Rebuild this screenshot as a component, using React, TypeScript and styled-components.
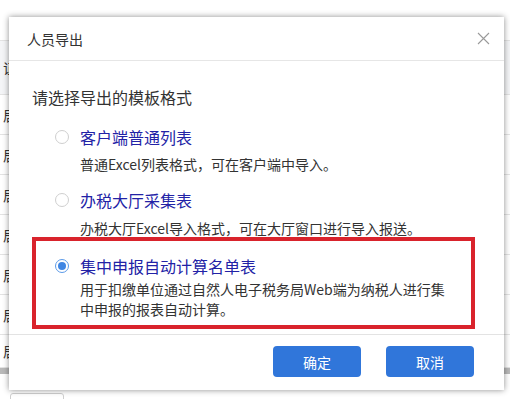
import React from "react";
import styled, { createGlobalStyle } from "styled-components";

const GlobalStyle = createGlobalStyle`
  html, body {
    margin: 0;
    padding: 0;
    background: #ffffff;
  }
  body {
    font-family: "Noto Sans CJK SC", "Noto Sans", "Liberation Sans", sans-serif;
    color: #333333;
  }
  * {
    box-sizing: border-box;
  }
`;

const Page = styled.div`
  position: relative;
  width: 510px;
  height: 399px;
  overflow: hidden;
  padding-top: 40px;
`;

const Table = styled.div`
  border-top: 1px solid #e3e3e3;
`;

const HeaderRow = styled.div`
  height: 54px;
  display: flex;
  align-items: center;
  padding-left: 3px;
  background: #f4f5f7;
  border-bottom: 1px solid #e3e3e3;
  font-size: 14px;
`;

const Row = styled.div<{ $height?: number }>`
  height: ${(p) => p.$height ?? 40}px;
  display: flex;
  align-items: center;
  padding-left: 3px;
  border-bottom: 1px solid #e3e3e3;
  font-size: 14px;
`;

const Scrollbar = styled.div`
  height: 6px;
  background: #b9b9b9;
`;

const Pager = styled.div`
  margin: 19px 0 0 10px;
  width: 54px;
  height: 24px;
  border: 1px solid #cfcfcf;
  border-radius: 3px;
  font-size: 13px;
  padding-left: 12px;
  line-height: 20px;
`;

const Dialog = styled.div`
  position: absolute;
  left: 9px;
  top: 17px;
  width: 495px;
  height: 373px;
  background: #ffffff;
  box-shadow: 0 0 6px rgba(0, 0, 0, 0.45);
  display: flex;
  flex-direction: column;
`;

const DialogHeader = styled.div`
  height: 44px;
  flex-shrink: 0;
  display: flex;
  align-items: center;
  justify-content: space-between;
  padding: 0 13px 0 18px;
  border-bottom: 1px solid #e6e6e6;
  font-size: 14px;
  color: #333333;
`;

const CloseButton = styled.button`
  width: 16px;
  height: 16px;
  padding: 0;
  border: none;
  background: none;
  display: flex;
  align-items: center;
  justify-content: center;
  cursor: pointer;
`;

const DialogBody = styled.div`
  flex: 1;
  padding: 25px 29px 0 23px;
`;

const Prompt = styled.div`
  font-size: 16px;
  line-height: 22px;
  color: #333333;
  margin-bottom: 18px;
`;

const Option = styled.div<{ $selected?: boolean; $gap: number; $after: number }>`
  padding: ${(p) => (p.$selected ? "14px 0 6px 19px" : "0 0 0 23px")};
  border: ${(p) => (p.$selected ? "4px solid #d9232c" : "none")};
  margin-bottom: ${(p) => p.$after}px;

  & > p {
    margin: ${(p) => p.$gap}px 0 0 25px;
  }
`;

const OptionHead = styled.label`
  display: flex;
  align-items: center;
  gap: 11px;
  height: 22px;
  cursor: pointer;
`;

const Radio = styled.span<{ $checked?: boolean }>`
  width: 14px;
  height: 14px;
  border-radius: 50%;
  border: 1px solid ${(p) => (p.$checked ? "#5b9ae8" : "#cfcfcf")};
  background: #ffffff;
  display: flex;
  align-items: center;
  justify-content: center;

  &::after {
    content: "";
    width: 8px;
    height: 8px;
    border-radius: 50%;
    background: ${(p) => (p.$checked ? "#3f86e3" : "transparent")};
  }
`;

const OptionTitle = styled.span`
  font-size: 16px;
  line-height: 22px;
  color: #2222a6;
`;

const OptionDesc = styled.p`
  font-size: 14px;
  line-height: 20px;
  color: #333333;
`;

const DialogFooter = styled.div`
  flex-shrink: 0;
  display: flex;
  justify-content: flex-end;
  gap: 25px;
  padding: 11px 30px 13px 0;
  border-top: 1px solid #e3e3e3;
`;

const Button = styled.button`
  width: 88px;
  height: 31px;
  border: none;
  border-radius: 4px;
  background: #3076da;
  color: #ffffff;
  font-family: inherit;
  font-size: 14px;
  cursor: pointer;
`;

const options = [
  {
    title: "客户端普通列表",
    desc: ["普通Excel列表格式，可在客户端中导入。"],
    gap: 6,
    after: 15,
  },
  {
    title: "办税大厅采集表",
    desc: ["办税大厅Excel导入格式，可在大厅窗口进行导入报送。"],
    gap: 7,
    after: -1,
  },
  {
    title: "集中申报自动计算名单表",
    desc: [
      "用于扣缴单位通过自然人电子税务局Web端为纳税人进行集",
      "中申报的报表自动计算。",
    ],
    gap: 2,
    after: 5,
  },
];

export default function App() {
  const selected = 2;
  return (
    <>
      <GlobalStyle />
      <Page>
        <Table>
          <HeaderRow>证</HeaderRow>
          {[0, 1, 2, 3, 4, 5].map((i) => (
            <Row key={i}>居</Row>
          ))}
          <Row $height={33}>居</Row>
        </Table>
        <Scrollbar />
        <Pager>1000</Pager>

        <Dialog>
          <DialogHeader>
            <span>人员导出</span>
            <CloseButton aria-label="关闭">
              <svg width="13" height="13" viewBox="0 0 13 13">
                <path d="M1 1 L12 12 M12 1 L1 12" stroke="#9a9a9a" strokeWidth="1.1" fill="none" />
              </svg>
            </CloseButton>
          </DialogHeader>
          <DialogBody>
            <Prompt>请选择导出的模板格式</Prompt>
            {options.map((o, i) => (
              <Option key={o.title} $selected={i === selected} $gap={o.gap} $after={o.after}>
                <OptionHead>
                  <Radio $checked={i === selected} />
                  <OptionTitle>{o.title}</OptionTitle>
                </OptionHead>
                <OptionDesc>
                  {o.desc.map((line, j) => (
                    <React.Fragment key={j}>
                      {line}
                      {j < o.desc.length - 1 && <br />}
                    </React.Fragment>
                  ))}
                </OptionDesc>
              </Option>
            ))}
          </DialogBody>
          <DialogFooter>
            <Button>确定</Button>
            <Button>取消</Button>
          </DialogFooter>
        </Dialog>
      </Page>
    </>
  );
}
